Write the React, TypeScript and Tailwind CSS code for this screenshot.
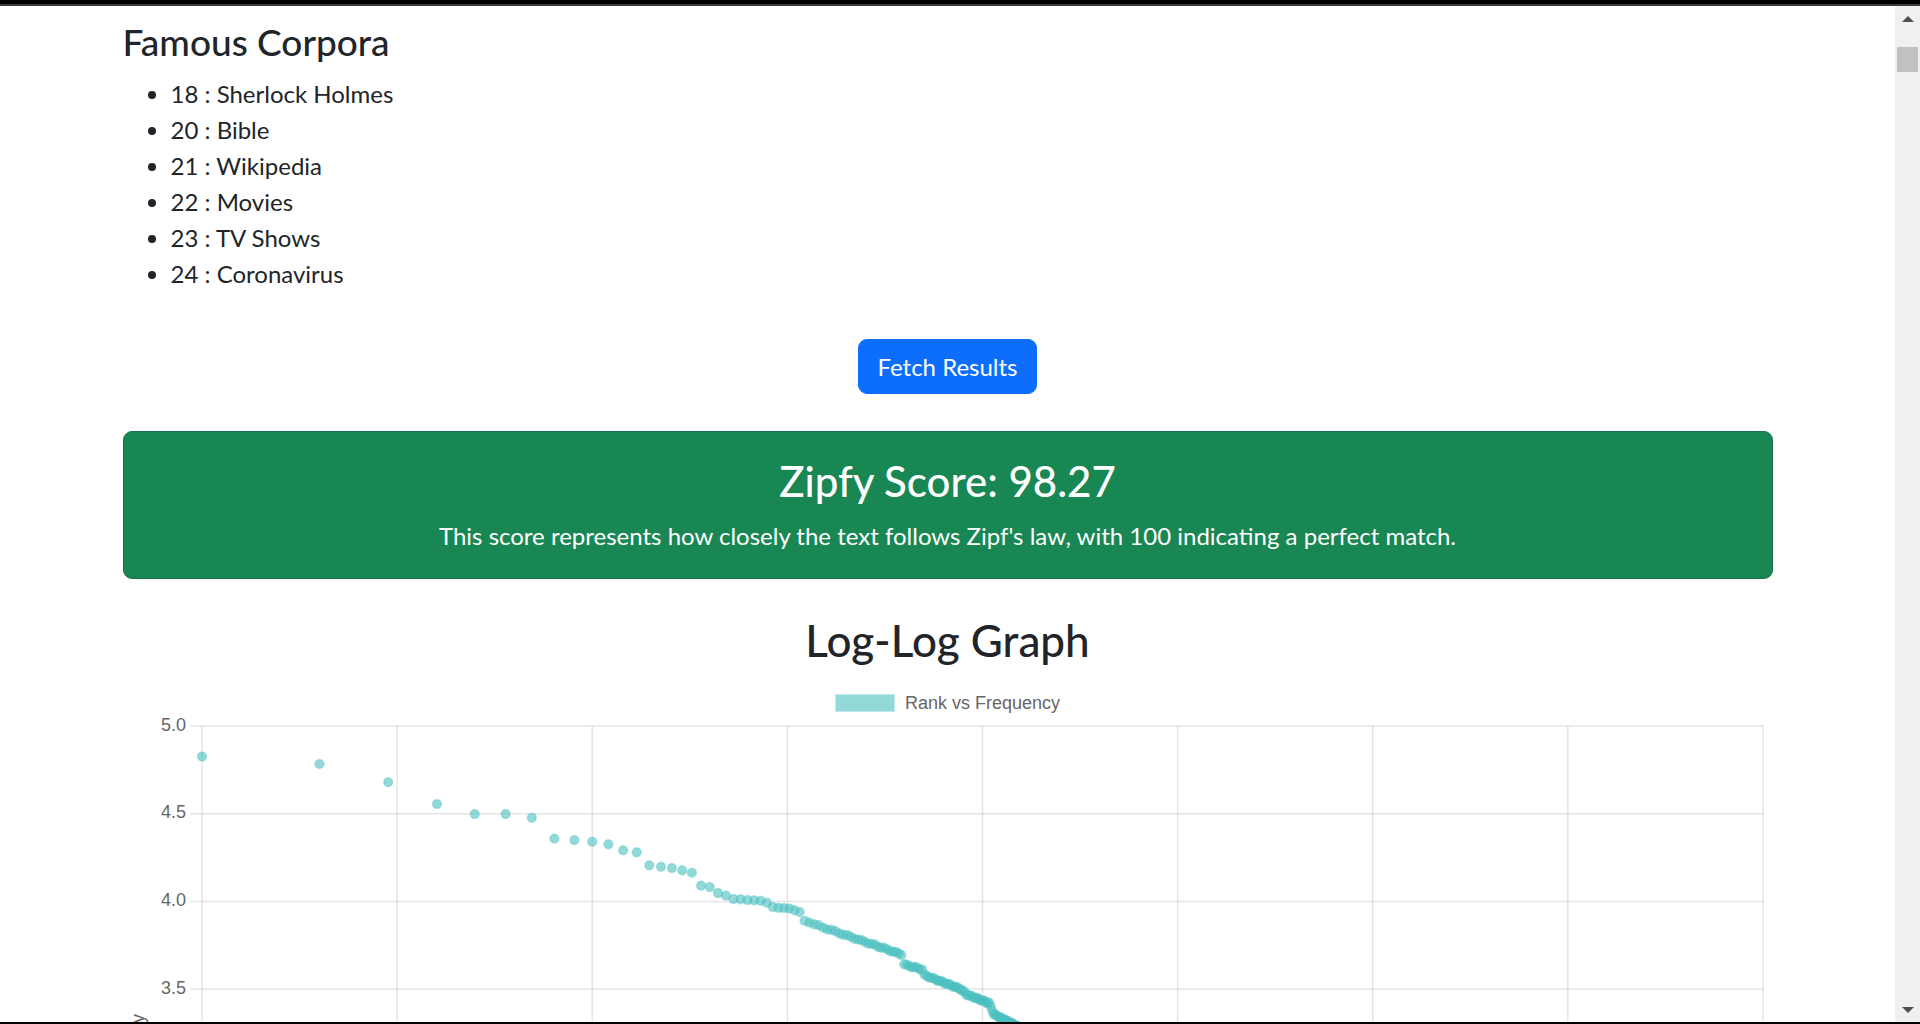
import React from "react";

const anchors: [number, number][] = [
  [1, 4.826], [2, 4.784], [3, 4.68], [4, 4.555], [5, 4.498], [6, 4.498], [7, 4.477],
  [8, 4.358], [9, 4.35], [10, 4.34], [11, 4.326], [12, 4.291], [13, 4.28], [14, 4.206],
  [15, 4.198], [16, 4.19], [17, 4.177], [18, 4.164], [19, 4.09], [20, 4.082], [21, 4.048],
  [22, 4.033], [23, 4.014], [24, 4.012], [25, 4.008], [26, 4.006], [27, 4.004], [28, 3.993],
  [29, 3.968], [30, 3.964], [31, 3.962], [32, 3.96], [33, 3.95], [34, 3.94], [35, 3.89],
  [36, 3.879], [62, 3.698], [63, 3.64], [70, 3.613], [71, 3.58], [88, 3.5], [91, 3.47],
  [104, 3.42], [107, 3.356], [120, 3.3], [160, 3.15],
];

function valueAt(r: number): number {
  for (let i = 0; i < anchors.length - 1; i++) {
    const [r0, v0] = anchors[i];
    const [r1, v1] = anchors[i + 1];
    if (r >= r0 && r <= r1) {
      if (r1 === r0) return v0;
      const t = (Math.log10(r) - Math.log10(r0)) / (Math.log10(r1) - Math.log10(r0));
      return v0 + (v1 - v0) * t;
    }
  }
  return anchors[anchors.length - 1][1];
}

const points = Array.from({ length: 160 }, (_, i) => {
  const r = i + 1;
  let v = valueAt(r);
  if (r > 36) v += Math.sin(r * 1.7) * 0.004;
  return { x: 79 + Math.log10(r) * 390.25, y: 14 + (5 - v) * 175.4 };
});

const X_STEP = 195.125;
const Y_STEP = 87.7;

function Chart() {
  const vLines = Array.from({ length: 9 }, (_, k) => 79 + k * X_STEP);
  const hLines = [
    { label: "5.0", y: 14 },
    { label: "4.5", y: 14 + Y_STEP },
    { label: "4.0", y: 14 + 2 * Y_STEP },
    { label: "3.5", y: 14 + 3 * Y_STEP },
    { label: "3.0", y: 14 + 4 * Y_STEP },
  ];
  return (
    <svg width={1650} height={420} className="block">
      {vLines.map((x, i) => (
        <line key={"v" + i} x1={x} x2={x} y1={14} y2={420} stroke="rgba(0,0,0,0.1)" strokeWidth={1.5} />
      ))}
      {hLines.map((h) => (
        <g key={h.label}>
          <line x1={67} x2={1640} y1={h.y} y2={h.y} stroke="rgba(0,0,0,0.1)" strokeWidth={1.5} />
          <text
            x={63}
            y={h.y}
            textAnchor="end"
            dominantBaseline="middle"
            fontSize={18}
            fill="#666"
            fontFamily="'Liberation Sans', Arial, sans-serif"
          >
            {h.label}
          </text>
        </g>
      ))}
      <text
        transform="translate(21,302) rotate(-90)"
        textAnchor="end"
        fontSize={18}
        fill="#666"
        fontFamily="'Liberation Sans', Arial, sans-serif"
      >
        Log Frequency
      </text>
      {points.map((p, i) => (
        <circle
          key={i}
          cx={p.x}
          cy={p.y}
          r={4.5}
          fill="rgba(75,192,192,0.6)"
          stroke="rgba(75,192,192,0.35)"
          strokeWidth={1.5}
        />
      ))}
    </svg>
  );
}

function Scrollbar() {
  return (
    <div className="w-[25px] shrink-0 bg-[#f0f0f0] flex flex-col">
      <div className="mt-[10px] flex justify-center">
        <svg width={12} height={6}>
          <polygon points="0,6 12,6 6,0" fill="#505050" />
        </svg>
      </div>
      <div className="mt-[25px] ml-[2px] mr-[2px] h-[25px] bg-[#c1c1c1]" />
      <div className="flex-1" />
      <div className="mb-[9px] flex justify-center">
        <svg width={12} height={6}>
          <polygon points="0,0 12,0 6,6" fill="#505050" />
        </svg>
      </div>
    </div>
  );
}

export default function App() {
  const corpora = [
    "18 : Sherlock Holmes",
    "20 : Bible",
    "21 : Wikipedia",
    "22 : Movies",
    "23 : TV Shows",
    "24 : Coronavirus",
  ];
  return (
    <div className="h-[1024px] w-[1920px] overflow-hidden bg-white flex flex-col font-['Lato',sans-serif] text-[#212529]">
      <div className="h-[4px] shrink-0 bg-black" />
      <div className="h-[2px] shrink-0 bg-[#3a3a3a]" />
      <div className="flex flex-1 min-h-0">
        <main className="flex-1 min-w-0 overflow-hidden">
          <div className="w-[1650px] mx-auto pt-[14px]">
            <h4 className="text-[37px] leading-[43px] font-medium mb-[13px]">Famous Corpora</h4>
            <ul className="list-disc pl-[48px] text-[24px] leading-[36px]">
              {corpora.map((c) => (
                <li key={c}>{c}</li>
              ))}
            </ul>
            <div className="flex justify-center mt-[47px]">
              <button className="bg-[#0d6efd] text-white text-[24px] leading-[35px] px-[18px] py-[9px] border border-[#0d6efd] rounded-[9px]">
                Fetch Results
              </button>
            </div>
            <div className="mt-[37px] rounded-[9px] border border-[#157347] bg-[#198754] text-white text-center p-[24px]">
              <h3 className="text-[42px] leading-[50px] font-medium mb-[12px]">Zipfy Score: 98.27</h3>
              <p className="text-[24px] leading-[36px]">
                This score represents how closely the text follows Zipf's law, with 100 indicating a perfect match.
              </p>
            </div>
            <h2 className="mt-[32px] text-[44px] leading-[58px] font-medium text-center mb-[12px]">Log-Log Graph</h2>
            <div className="flex justify-center items-center gap-[10px] pt-[13px] font-['Liberation_Sans',Arial,sans-serif]">
              <div className="w-[60px] h-[18px] bg-[#93d9d9] border-[1.5px] border-[#c4e8e8]" />
              <span className="text-[18px] leading-[18px] text-[#666]">Rank vs Frequency</span>
            </div>
            <Chart />
          </div>
        </main>
        <Scrollbar />
      </div>
      <div className="h-[2px] shrink-0 bg-black" />
    </div>
  );
}
